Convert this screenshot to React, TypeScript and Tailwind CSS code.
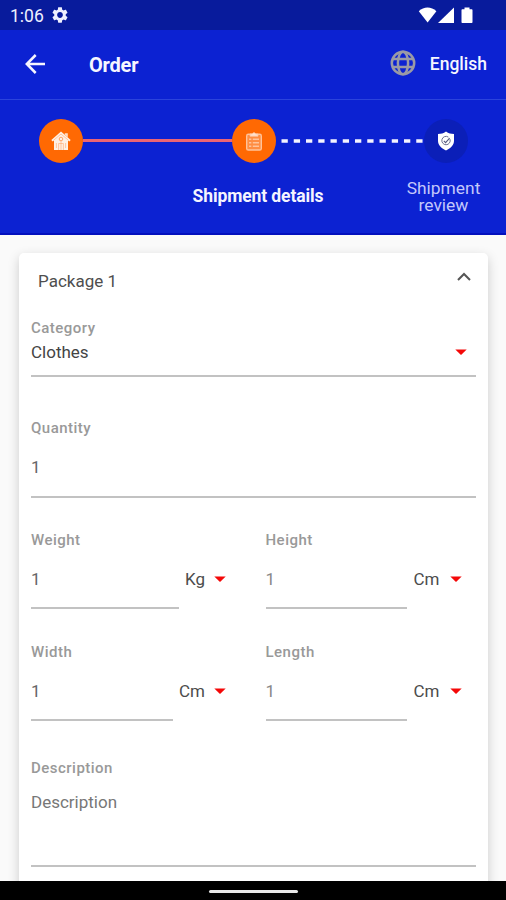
import React from "react";

function Arrow() {
  return (
    <svg viewBox="0 0 12 6" className="h-[6px] w-[12px] shrink-0">
      <path d="M0.3 0.4h11.4L6 6z" fill="#f40808" />
    </svg>
  );
}

function Label({ children }: { children: React.ReactNode }) {
  return (
    <div className="h-5 text-[15px] leading-5 font-medium tracking-[0.48px] text-[#999]">
      {children}
    </div>
  );
}

type MeasureProps = {
  label: string;
  unit: string;
  field: string;
  unitBox: string;
  tone: string;
};

function Measure({ label, unit, field, unitBox, tone }: MeasureProps) {
  return (
    <div>
      <Label>{label}</Label>
      <div className="flex">
        <div className={"h-[59px] border-b-2 border-[#c2c2c2] pt-[19px] " + field}>
          <div className={"h-5 text-[17px] leading-5 " + tone}>1</div>
        </div>
        <div className={"mt-[19px] flex h-5 items-center justify-between text-[17px] text-[#4c4c4c] " + unitBox}>
          <span className="pt-[2px]">{unit}</span>
          <Arrow />
        </div>
      </div>
    </div>
  );
}

function StatusBar() {
  return (
    <div className="flex h-[30px] items-center bg-[#081b9c] pl-[10px] pr-[32px] text-[#eef0ff]">
      <span className="w-[42px] pt-[2px] text-[17.5px] leading-[30px]">1:06</span>
      <svg viewBox="2 2 20 20" className="h-[16px] w-[16px]" fill="currentColor">
        <path d="M19.14 12.94c.04-.3.06-.61.06-.94 0-.32-.02-.64-.07-.94l2.03-1.58c.18-.14.23-.41.12-.61l-1.92-3.32c-.12-.22-.37-.29-.59-.22l-2.39.96c-.5-.38-1.03-.7-1.62-.94l-.36-2.54c-.04-.24-.24-.41-.48-.41h-3.84c-.24 0-.43.17-.47.41l-.36 2.54c-.59.24-1.13.57-1.62.94l-2.39-.96c-.22-.08-.47 0-.59.22L2.74 8.87c-.12.21-.08.47.12.61l2.03 1.58c-.05.3-.09.63-.09.94s.02.64.07.94l-2.03 1.58c-.18.14-.23.41-.12.61l1.92 3.32c.12.22.37.29.59.22l2.39-.96c.5.38 1.03.7 1.62.94l.36 2.54c.05.24.24.41.48.41h3.84c.24 0 .44-.17.47-.41l.36-2.54c.59-.24 1.13-.56 1.62-.94l2.39.96c.22.08.47 0 .59-.22l1.92-3.32c.12-.22.07-.47-.12-.61l-2.01-1.58zM12 15.6c-1.98 0-3.6-1.62-3.6-3.6s1.62-3.6 3.6-3.6 3.6 1.62 3.6 3.6-1.62 3.6-3.6 3.6z" />
      </svg>
      <svg viewBox="0 0 56 18" className="ml-auto h-[18px] w-[56px]" fill="#fff">
        <path d="M0.8 5.2C5.8 0.3 13.2 0.3 18.4 5.2L9.6 16.6z" />
        <path d="M36 1.4V17H20z" />
        <path d="M44.5 3.2h2V1.4h5v1.8h2c.6 0 1 .4 1 1V16c0 .6-.4 1-1 1h-9c-.6 0-1-.4-1-1V4.2c0-.6.4-1 1-1z" />
      </svg>
    </div>
  );
}

function AppBar() {
  return (
    <div className="flex h-[70px] items-center border-b border-[#2b43dc] pl-[25px] pr-[19px] text-[#f6f6ff]">
      <svg viewBox="0 0 20 20" className="mb-px h-5 w-5" fill="none" stroke="currentColor" strokeWidth="2.5">
        <path d="M20 10H2M10.7 1L1.8 10l8.9 9" />
      </svg>
      <span className="ml-[44px] text-[20px] font-bold tracking-[-0.2px]">Order</span>
      <svg viewBox="0 0 26 26" className="mb-[3px] ml-auto h-[26px] w-[26px]" fill="none" stroke="#9a9aa6" strokeWidth="2.5">
        <circle cx="13" cy="13" r="11.2" />
        <ellipse cx="13" cy="13" rx="5.1" ry="11.2" />
        <path d="M2.4 9.1h21.2M2.4 16.9h21.2" />
      </svg>
      <span className="ml-[14px] text-[17.5px] font-medium">English</span>
    </div>
  );
}

function Stepper() {
  return (
    <div className="h-[135px] border-b-2 border-[#0310bd] pt-[19px]">
      <div className="flex h-[43px] items-center pl-[39px] pr-[38px]">
        <div className="flex h-[44px] w-[44px] shrink-0 items-center justify-center rounded-full bg-[#ff6903]">
          <svg viewBox="0 0 20 20" className="h-5 w-5" fill="#fff0e4">
            <path d="M13.8 2.2h3v4l-3-2.4z" opacity=".85" />
            <path d="M10 0.5L0.3 9l1.4 1.5L3 9.6V19h14V9.6l1.3.9L19.7 9z" />
            <g fill="none" stroke="#ff9a58">
              <path d="M2.7 9.2L10 3l7.3 6.2" strokeWidth=".5" />
              <circle cx="10" cy="8" r="1.8" strokeWidth=".9" />
              <path d="M7.6 19v-6.5h4.8V19M10 10v9M5.4 12v5M14.6 12v5" strokeWidth=".5" />
            </g>
          </svg>
        </div>
        <div className="h-[3px] w-[149px] bg-[#eb6574]" />
        <div className="flex h-[44px] w-[44px] shrink-0 items-center justify-center rounded-full bg-[#ff6903]">
          <svg viewBox="0 0 18 20" className="h-5 w-[18px]" fill="none" stroke="#ffc39a">
            <rect x="1.7" y="3.3" width="14.6" height="15.7" rx="1.6" strokeWidth="1.4" fill="#ff8d42" />
            <path d="M5 5.2V2.9h2.3a1.8 1.8 0 0 1 3.4 0H13v2.3z" fill="#ffe2cf" strokeWidth=".8" />
            <path d="M4 8.2h2.3M7.8 8.2h6.2M4 11.7h2.3M7.8 11.7h6.2M4 15.2h2.3M7.8 15.2h6.2" strokeWidth="1.5" />
          </svg>
        </div>
        <svg viewBox="0 0 148 4" className="h-1 w-[148px]">
          <path d="M5.5 2H148" stroke="#f4f4ff" strokeWidth="3.5" strokeDasharray="6.3 5.95" />
        </svg>
        <div className="flex h-[44px] w-[44px] shrink-0 items-center justify-center rounded-full bg-[#0b1fb8]">
          <svg viewBox="0 0 18 20" className="h-5 w-[18px]" fill="none">
            <path d="M9 0.6C6.5 2.4 4 3 1 3v6.8c0 4.4 3 7.2 8 9.7 5-2.5 8-5.3 8-9.7V3c-3 0-5.5-.6-8-2.4z" fill="#fff" />
            <path d="M13 8.2a4.2 4.2 0 1 1-1.6-2.1" stroke="#6c7190" strokeWidth="1" />
            <path d="M6.8 9.8l1.8 1.8 4-4.5" stroke="#555b80" strokeWidth="1.1" />
          </svg>
        </div>
      </div>
      <div className="flex">
        <div className="w-[162px]" />
        <div className="w-[192px] pt-[24px] text-center text-[17.5px] leading-[20px] font-bold tracking-[-0.1px] text-[#f4f4ff]">
          Shipment details
        </div>
        <div className="ml-[43px] w-[93px] pt-[18px] text-center text-[17.4px] leading-[17px] text-[#c3c8fb]">
          Shipment review
        </div>
      </div>
    </div>
  );
}

export default function App() {
  return (
    <div className="flex h-[900px] w-[506px] flex-col overflow-hidden bg-[#fafafa] font-['Roboto','Liberation_Sans',sans-serif]">
      <header className="shrink-0 bg-[#0c22d2]">
        <StatusBar />
        <AppBar />
        <Stepper />
      </header>
      <main className="min-h-0 flex-1 overflow-hidden pt-[18px] pr-[18px] pl-[19px]">
        <section className="h-[660px] rounded-[5px] bg-white px-3 shadow-[0_4px_12px_rgba(0,0,0,0.19)]">
          <div className="flex h-[56px] items-center justify-between pr-[5px] pl-[7px]">
            <span className="pt-[2px] text-[17px] text-[#4e4e4e]">Package 1</span>
            <svg viewBox="0 0 14 9" className="mb-[9px] h-[9px] w-[14px]" fill="none" stroke="#555" strokeWidth="2">
              <path d="M1 8l6-6 6 6" />
            </svg>
          </div>
          <div className="h-[68px] border-b-2 border-[#c2c2c2] pt-[9px]">
            <Label>Category</Label>
            <div className="mt-1 flex h-5 items-center justify-between pr-[9px] text-[17px] text-[#444]">
              <span className="pt-[2px]">Clothes</span>
              <Arrow />
            </div>
          </div>
          <div className="mt-[41px] h-[80px] border-b-2 border-[#c2c2c2]">
            <Label>Quantity</Label>
            <div className="mt-[19px] h-5 text-[17px] leading-5 text-[#666]">1</div>
          </div>
          <div className="mt-[32px] flex">
            <div className="w-[234.5px]">
              <Measure label="Weight" unit="Kg" field="w-[148px]" unitBox="ml-[6px] w-[41px]" tone="text-[#666]" />
            </div>
            <Measure label="Height" unit="Cm" field="w-[141px]" unitBox="ml-[7px] w-[48px]" tone="text-[#888]" />
          </div>
          <div className="mt-[33px] flex">
            <div className="w-[234.5px]">
              <Measure label="Width" unit="Cm" field="w-[142px]" unitBox="ml-[6px] w-[47px]" tone="text-[#666]" />
            </div>
            <Measure label="Length" unit="Cm" field="w-[141px]" unitBox="ml-[7px] w-[48px]" tone="text-[#888]" />
          </div>
          <div className="mt-[37px] h-[109px] border-b-2 border-[#c2c2c2]">
            <Label>Description</Label>
            <div className="mt-[14px] h-5 text-[17px] leading-5 text-[#777]">Description</div>
          </div>
        </section>
      </main>
      <footer className="relative z-10 flex h-[19px] shrink-0 justify-center bg-black pt-[9px]">
        <div className="h-[3px] w-[89px] rounded-sm bg-[#e8e8e8]" />
      </footer>
    </div>
  );
}
